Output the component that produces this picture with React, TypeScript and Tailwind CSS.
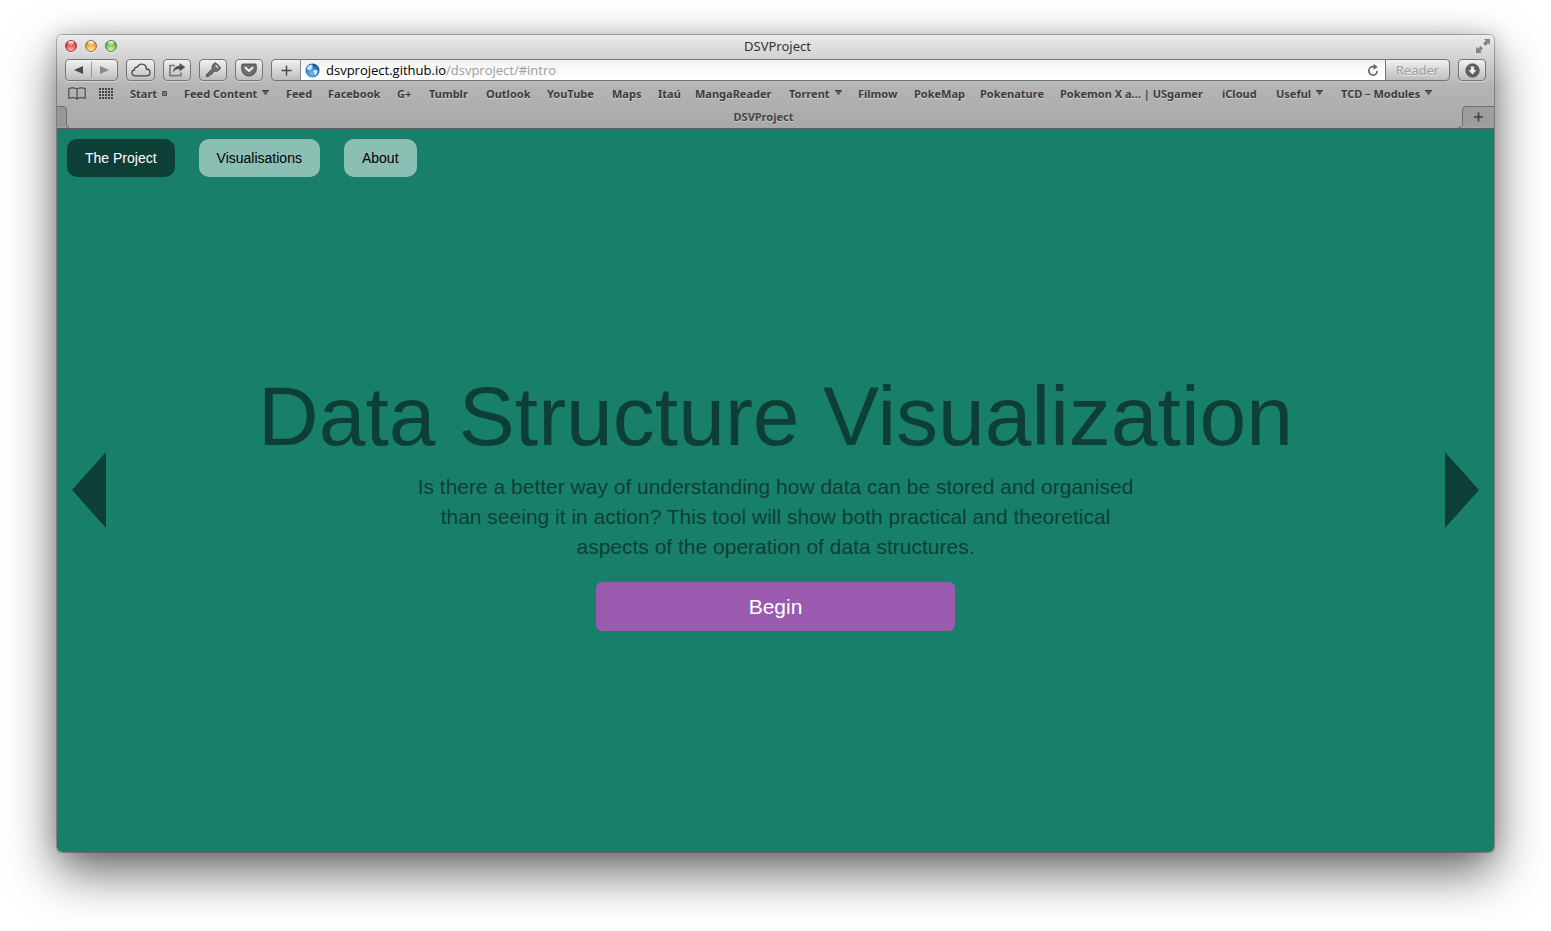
import React from "react";

const toolButton =
  "flex h-[22px] shrink-0 items-center justify-center rounded-[4px] border border-[#757575] bg-linear-to-b from-[#f2f2f2] to-[#bdbdbd] shadow-[0_1px_0_rgba(255,255,255,0.4)]";

const bookmarks: { label: string; width: string; mark?: "arrow" | "square" }[] = [
  { label: "Start", width: "w-[54px]", mark: "square" },
  { label: "Feed Content", width: "w-[102px]", mark: "arrow" },
  { label: "Feed", width: "w-[42px]" },
  { label: "Facebook", width: "w-[69px]" },
  { label: "G+", width: "w-[32px]" },
  { label: "Tumblr", width: "w-[57px]" },
  { label: "Outlook", width: "w-[61px]" },
  { label: "YouTube", width: "w-[65px]" },
  { label: "Maps", width: "w-[46px]" },
  { label: "Itaú", width: "w-[37px]" },
  { label: "MangaReader", width: "w-[94px]" },
  { label: "Torrent", width: "w-[69px]", mark: "arrow" },
  { label: "Filmow", width: "w-[56px]" },
  { label: "PokeMap", width: "w-[66px]" },
  { label: "Pokenature", width: "w-[80px]" },
  { label: "Pokemon X a… | USgamer", width: "w-[162px]" },
  { label: "iCloud", width: "w-[54px]" },
  { label: "Useful", width: "w-[65px]", mark: "arrow" },
  { label: "TCD – Modules", width: "w-[100px]", mark: "arrow" },
];

const lights = [
  { name: "Close", style: "border-[#9a3a3a] bg-[radial-gradient(circle_at_50%_100%,#ffc4bd,#ec5258_55%,#a52a2f)]" },
  { name: "Minimise", style: "border-[#9c6c34] bg-[radial-gradient(circle_at_50%_100%,#fff2b4,#f0ac4b_55%,#a9682a)]" },
  { name: "Zoom", style: "border-[#4f7d3a] bg-[radial-gradient(circle_at_50%_100%,#e3fbc6,#80c560_55%,#427a30)]" },
];

function TitleBar() {
  return (
    <div className="flex h-6 items-center justify-between pr-1 pb-[2px] pl-2">
      <div className="flex w-16 gap-2">
        {lights.map((l) => (
          <button
            key={l.name}
            aria-label={l.name}
            className={`flex size-3 justify-center rounded-full border shadow-[0_1px_0_rgba(255,255,255,0.6)] ${l.style}`}
          >
            <span className="h-1 w-[6px] rounded-full bg-linear-to-b from-white/90 to-white/30" />
          </button>
        ))}
      </div>
      <span className="text-[13px] leading-4 text-[#333]">DSVProject</span>
      <div className="flex w-16 justify-end">
        <button aria-label="Full screen">
          <svg width="14" height="14" viewBox="0 0 14 14" fill="#858585">
            <path d="M8 0H14V6L12.200 4.200L9.400 7L7 4.600L9.800 1.800Z" />
            <path d="M6 14H0V8L1.800 9.800L4.600 7L7 9.400L4.200 12.200Z" />
            <path d="M5.500 8.500L8.500 5.500" stroke="#dcdcdc" strokeWidth="0" />
          </svg>
        </button>
      </div>
    </div>
  );
}

function Toolbar() {
  return (
    <div className="flex items-center gap-2 px-2">
      <div className={`${toolButton} w-[53px]`}>
        <button aria-label="Back" className="flex h-full flex-1 items-center justify-center">
          <svg width="9" height="8" viewBox="0 0 9 8"><path d="M9 0V8L0 4Z" fill="#4b4b4b" /></svg>
        </button>
        <span className="h-4 w-px bg-[#9a9a9a]" />
        <button aria-label="Forward" className="flex h-full flex-1 items-center justify-center">
          <svg width="9" height="8" viewBox="0 0 9 8"><path d="M0 0V8L9 4Z" fill="#898989" /></svg>
        </button>
      </div>
      <button aria-label="iCloud tabs" className={`${toolButton} w-[29px]`}>
        <svg width="20" height="14" viewBox="0 0 20 14" fill="none" stroke="#4a4a4a" strokeWidth="1.3">
          <path d="M4.500 12.800C2.300 12.800 1 11.500 1 9.800C1 8 2.200 7 3.500 7C3.200 5 4.600 3.900 6.200 4.300C7.200 2 9 1 11 1.200C13.700 1.400 15.400 3.400 15.300 6C17.700 6 19 7.500 19 9.400C19 11.300 17.600 12.800 15.600 12.800Z" />
        </svg>
      </button>
      <button aria-label="Share" className={`${toolButton} w-[28px]`}>
        <svg width="18" height="14" viewBox="0 0 18 14" fill="none">
          <path d="M7 2.500H2V12.700H13V9.500" stroke="#7a7a7a" strokeWidth="1.700" />
          <path d="M11.500 0L17.200 4.300L11.500 8.600V6C8.500 6 6.500 7 5 9.600C5.200 5.500 7.500 2.800 11.500 2.700Z" fill="#505050" />
        </svg>
      </button>
      <button aria-label="Passwords" className={`${toolButton} w-[28px]`}>
        <svg width="16" height="16" viewBox="0 0 16 16">
          <path d="M8.500 1.800L10.500 0.700L15.300 5L14.700 7.500L11.500 9.500L9.800 9L7.600 10.500L7 12L5.200 12.200L4.600 13.800L1.500 14.700L1.200 13L7.200 6.500L7 4.200Z" fill="#707070" stroke="#484848" strokeWidth="0.900" />
          <path d="M10.600 3.500L13 5.700" stroke="#e2e2e2" strokeWidth="1.300" />
        </svg>
      </button>
      <button aria-label="Save to Pocket" className={`${toolButton} w-[28px]`}>
        <svg width="16" height="14" viewBox="0 0 16 14">
          <path d="M2 1H14Q15.300 1 15.300 2.300V6A7.300 7 0 0 1 0.700 6V2.300Q0.700 1 2 1Z" fill="#6e6e6e" stroke="#494949" strokeWidth="0.900" />
          <path d="M4.500 4.700L8 8L11.500 4.700" fill="none" stroke="#ededed" strokeWidth="2.100" strokeLinecap="round" strokeLinejoin="round" />
        </svg>
      </button>
      <div className="flex h-[22px] min-w-0 flex-1 overflow-hidden rounded-[4px] border border-[#757575] bg-linear-to-b from-[#f2f2f2] to-[#bdbdbd]">
        <button aria-label="Add bookmark" className="flex w-[29px] shrink-0 items-center justify-center border-r border-[#8a8a8a]">
          <svg width="11" height="11" viewBox="0 0 11 11"><path d="M5.500 0.500V10.500M0.500 5.500H10.500" stroke="#484848" strokeWidth="1.500" /></svg>
        </button>
        <div className="flex min-w-0 flex-1 items-center bg-linear-to-b from-[#f1f1f1] via-[#fbfbfb] to-white px-1">
          <svg width="15" height="15" viewBox="0 0 15 15" className="shrink-0">
            <defs>
              <radialGradient id="globe" cx="0.450" cy="0.700" r="0.700">
                <stop offset="0" stopColor="#75bdf1" />
                <stop offset="0.600" stopColor="#327cc9" />
                <stop offset="1" stopColor="#194a91" />
              </radialGradient>
            </defs>
            <circle cx="7.500" cy="7.500" r="7" fill="url(#globe)" />
            <path d="M3.500 2.800L6 1.600L8 2.200L7 3.500L7.800 4.800L6.300 6.200L5 7.400L3.400 6.500L2 7L2 4.800Z" fill="#c8e4f7" />
            <path d="M8.700 7.200L11 6.800L12.700 8L11.900 10.200L10.300 12.200L9.200 11.500L9.300 9.800L8.200 8.700Z" fill="#d3ebf9" />
          </svg>
          <a href="#intro" className="ml-[6px] flex-1 truncate font-['Open_Sans','Noto_Sans',sans-serif] text-[13px] leading-5 text-[#9c9c9c]">
            <span className="text-black">dsvproject.github.io</span>/dsvproject/#intro
          </a>
          <button aria-label="Reload" className="mr-[2px] shrink-0">
            <svg width="12" height="13" viewBox="0 0 12 13">
              <path d="M7.500 2.700H5.500A4.200 4.200 0 1 0 10.200 7" fill="none" stroke="#666" strokeWidth="1.700" />
              <path d="M6.500 0L10.800 2.900L6.500 5.800Z" fill="#666" />
            </svg>
          </button>
        </div>
        <button className="w-16 shrink-0 border-l border-[#777] text-[13px] leading-5 text-[#a0a0a0] [text-shadow:0_1px_0_#eee]">Reader</button>
      </div>
      <button aria-label="Downloads" className={`${toolButton} w-[28px]`}>
        <svg width="15" height="15" viewBox="0 0 15 15">
          <circle cx="7.500" cy="7.500" r="6.800" fill="#606060" stroke="#484848" strokeWidth="0.600" />
          <path d="M5.900 3.500H9.100V7H11.500L7.500 11.400L3.500 7H5.900Z" fill="#efefef" />
        </svg>
      </button>
    </div>
  );
}

function BookmarksBar() {
  return (
    <div className="flex h-[25px] items-center overflow-hidden pl-[11px]">
      <button aria-label="Show bookmarks" className="mr-[13px] shrink-0">
        <svg width="18" height="13" viewBox="0 0 18 13" fill="none" stroke="#4c4c4c" strokeWidth="1.200">
          <path d="M9 2.200C7.500 0.500 2.500 0.500 0.800 1.800V11.300C3 10.400 7.500 10.200 9 12C10.500 10.200 15 10.400 17.200 11.300V1.800C15.500 0.500 10.500 0.500 9 2.200V12" />
        </svg>
      </button>
      <button aria-label="Top sites" className="mr-4 shrink-0">
        <svg width="15" height="12" viewBox="0 0 15 12" fill="#444">
          {[0, 3, 6, 9].map((y) =>
            [0, 3, 6, 9, 12].map((x) => <rect key={`${x}-${y}`} x={x} y={y} width="2" height="2" />)
          )}
        </svg>
      </button>
      {bookmarks.map((b) => (
        <a
          key={b.label}
          href="#bookmark"
          className={`flex shrink-0 items-center gap-[5px] text-[11px] leading-4 font-bold whitespace-nowrap text-[#3c3c3c] [text-shadow:0_1px_0_rgba(255,255,255,0.45)] ${b.width}`}
        >
          {b.label}
          {b.mark === "arrow" && (
            <svg width="7" height="6" viewBox="0 0 7 6" className="mb-[2px]"><path d="M0 0.500H7L3.500 5.500Z" fill="#5a5a5a" /><path d="M0 0.500H7" stroke="#3c3c3c" /></svg>
          )}
          {b.mark === "square" && (
            <svg width="5" height="5" viewBox="0 0 5 5"><path d="M0.500 0.500H4.500V4.500H0.500Z" fill="#7c7c7c" stroke="#505050" /></svg>
          )}
        </a>
      ))}
    </div>
  );
}

function TabBar() {
  return (
    <div className="flex h-[23px] border-b border-[#5c5c5c]">
      <div className="flex w-[12px]">
        <svg width="12" height="22" viewBox="0 0 12 22" fill="none">
          <path d="M0 0.500H6Q9.500 0.500 9.500 4V18Q9.500 21.500 12 21.500H0Z" fill="#979797" />
          <path d="M0 0.500H6Q9.500 0.500 9.500 4V18Q9.500 21.500 12 21.500" stroke="#6e6e6e" />
        </svg>
      </div>
      <div className="flex flex-1 items-center justify-center text-[11px] leading-4 font-bold text-[#444] [text-shadow:0_1px_0_rgba(255,255,255,0.45)]">
        DSVProject
      </div>
      <button aria-label="New tab" className="flex items-center">
        <svg width="36" height="22" viewBox="0 0 36 22" fill="none">
          <path d="M36 0.500H8Q4.500 0.500 4.500 4V18Q4.500 21.500 0 21.500H36Z" fill="#9d9d9d" />
          <path d="M36 0.500H8Q4.500 0.500 4.500 4V18Q4.500 21.500 0 21.500" stroke="#6e6e6e" />
          <path d="M20.500 6.500V15.500M16 11H25" stroke="#404040" strokeWidth="1.700" />
        </svg>
      </button>
    </div>
  );
}

function Page() {
  const pill = "h-[38px] rounded-[10px] px-[18px] text-[14px] leading-5";
  return (
    <main className="flex flex-1 flex-col bg-[#18806a] font-['Liberation_Sans',Arial,sans-serif]">
      <nav className="flex gap-6 px-[10px] py-[10px]">
        <button className={`${pill} bg-[#0d3f36] text-white`}>The Project</button>
        <button className={`${pill} bg-[#8bbfb4] text-black`}>Visualisations</button>
        <button className={`${pill} bg-[#8bbfb4] text-black`}>About</button>
      </nav>
      <div className="flex flex-1 items-center px-[15px] pb-[38px]">
        <button aria-label="Previous" className="mb-[22px] shrink-0">
          <svg width="34" height="76" viewBox="0 0 34 76"><path d="M34 0V76L0 38Z" fill="#0d3f36" /></svg>
        </button>
        <section className="flex flex-1 flex-col items-center text-center text-[#0d3f36]">
          <h1 className="mb-[10px] text-[84px] leading-[92px]">Data Structure Visualization</h1>
          <p className="mb-5 max-w-[720px] text-[21px] leading-[30px]">
            Is there a better way of understanding how data can be stored and organised than seeing it in action? This
            tool will show both practical and theoretical aspects of the operation of data structures.
          </p>
          <button className="h-[49px] w-[359px] rounded-md bg-[#9b59b0] text-[21px] leading-7 text-white">Begin</button>
        </section>
        <button aria-label="Next" className="mb-[22px] shrink-0">
          <svg width="34" height="76" viewBox="0 0 34 76"><path d="M0 0V76L34 38Z" fill="#0d3f36" /></svg>
        </button>
      </div>
    </main>
  );
}

export default function App() {
  return (
    <div className="flex min-h-screen flex-col bg-white px-[57px] pt-[35px] pb-[79px] font-['Noto_Sans','Open_Sans',sans-serif]">
      <div className="flex flex-1 flex-col overflow-hidden rounded-[5px] shadow-[0_0_0_1px_rgba(0,0,0,0.25),0_20px_50px_rgba(0,0,0,0.6),0_0_20px_rgba(0,0,0,0.15)]">
        <header className="bg-linear-to-b from-[#ebebeb] via-[#b4b4b4] via-55% to-[#a8a8a8]">
          <TitleBar />
          <Toolbar />
          <BookmarksBar />
          <TabBar />
        </header>
        <Page />
      </div>
    </div>
  );
}
